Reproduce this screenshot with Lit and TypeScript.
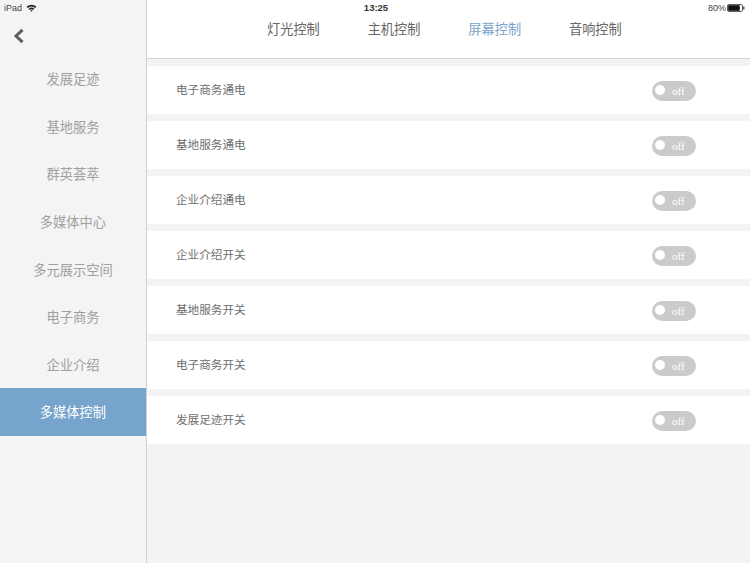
import { LitElement, html, css } from "lit";
import { customElement } from "lit/decorators.js";

const NAV = ["发展足迹","基地服务","群英荟萃","多媒体中心","多元展示空间","电子商务","企业介绍","多媒体控制"];
const TABS = ["灯光控制","主机控制","屏幕控制","音响控制"];
const ROWS = ["电子商务通电","基地服务通电","企业介绍通电","企业介绍开关","基地服务开关","电子商务开关","发展足迹开关"];

@customElement("app-root")
export class AppRoot extends LitElement {
  static styles = css`
    :host { display: block; width: 750px; height: 563px; overflow: hidden; position: relative; background: #f3f3f3;
      font-family: "Noto Sans CJK SC", "Liberation Sans", sans-serif; }
    .layout { display: grid; grid-template-columns: 146px 1fr; height: 563px; }
    .side { background: #f4f4f4; border-right: 1px solid #d2d2d2; width: 146px; box-sizing: content-box; display: flex; flex-direction: column; }
    .back { height: 55px; flex: none; display: flex; align-items: flex-start; padding: 28px 0 0 13px; box-sizing: border-box; }
    .nav { height: 47.6px; flex: none; box-sizing: border-box; display: flex; align-items: center; justify-content: center; font-size: 13.25px; color: #a0a0a0; }
    .nav.on { background: #76a4cc; color: #fff; }
    .main { margin-left: 1px; min-width: 0; display: flex; flex-direction: column; }
    .head { background: #fff; border-bottom: 1px solid #d6d6d6; display: flex; justify-content: center; gap: 47.67px; padding: 20px 8px 0 0; box-sizing: border-box; height: 59px; }
    .tab { font-size: 13.2px; line-height: 18px; color: #666; width: 53px; white-space: nowrap; }
    .tab.on { color: #7ba6cb; }
    .list { display: flex; flex-direction: column; gap: 7px; padding-top: 7px; }
    .row { height: 48px; background: #fff; display: flex; align-items: center; justify-content: space-between; padding: 0 54px 0 29px; font-size: 11.6px; color: #6e6e6e; }
    .label { padding-bottom: 2px; }
    .toggle { width: 44px; height: 20px; margin-top: 2px; border-radius: 10px; background: #cbcbcb; display: flex; align-items: center; padding-left: 3px; box-sizing: border-box; }
    .knob { width: 10px; height: 10px; border-radius: 50%; background: #fff; margin: -3px 7px 0 0; flex: none; }
    .off { font-family: "Liberation Serif", serif; font-size: 11px; color: #fff; line-height: 20px; }
    .status { position: absolute; inset: 0 0 auto 0; height: 15px; display: flex; align-items: center; justify-content: space-between; padding: 0 5px 0 4px; font-family: "Liberation Sans", sans-serif; font-size: 9px; color: #444; }
    .status .l { display: flex; align-items: center; gap: 4px; }
    .status .r { display: flex; align-items: center; gap: 1px; }
    .time { position: absolute; left: 0; right: 0; top: 0; text-align: center; line-height: 15px; font-size: 9.5px; font-weight: 700; color: #333; padding-left: 2px; }
    .batt { display: flex; align-items: center; gap: 1px; }
  `;

  render() {
    return html`
      <div class="layout">
        <aside class="side">
          <div class="back">
            <svg width="12" height="16" viewBox="0 0 12 16"><path d="M9.5 1.8 L3 8 L9.5 14.2" fill="none" stroke="#5e5e5e" stroke-width="3"/></svg>
          </div>
          ${NAV.map((n, i) => html`<div class="nav ${i === 7 ? "on" : ""}">${n}</div>`)}
        </aside>
        <main class="main">
          <header class="head">
            ${TABS.map((t, i) => html`<div class="tab ${i === 2 ? "on" : ""}">${t}</div>`)}
          </header>
          <section class="list">
            ${ROWS.map(r => html`<div class="row"><span class="label">${r}</span>
              <div class="toggle"><div class="knob"></div><span class="off">off</span></div></div>`)}
          </section>
        </main>
      </div>
      <div class="status">
        <div class="l"><span>iPad</span>
          <svg width="11" height="8" viewBox="0 0 11 8"><path d="M0.6 2.8 A7 7 0 0 1 10.4 2.8 L9.2 4 A5.3 5.3 0 0 0 1.8 4 Z M2.6 4.8 A4.2 4.2 0 0 1 8.4 4.8 L7.2 6 A2.5 2.5 0 0 0 3.8 6 Z M4.4 6.6 A1.5 1.5 0 0 1 6.6 6.6 L5.5 7.8 Z" fill="#222"/></svg>
        </div>
        <div class="time">13:25</div>
        <div class="r"><span>80%</span>
          <div class="batt"><svg width="18" height="8" viewBox="0 0 18 8"><rect x="0.5" y="0.5" width="15" height="7" rx="1.3" fill="none" stroke="#333" stroke-width="0.8"/><rect x="1.2" y="1.2" width="11.6" height="5.6" fill="#111"/><rect x="16.2" y="2.6" width="1.2" height="2.8" fill="#333"/></svg></div>
        </div>
      </div>
    `;
  }
}
